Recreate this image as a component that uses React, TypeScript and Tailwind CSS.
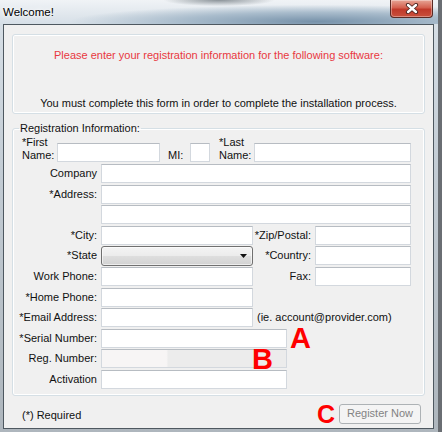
import type { ReactNode } from "react";

function Box({ className = "" }: { className?: string }) {
  return (
    <input
      readOnly
      className={`block h-[19px] shrink-0 border border-[#d3d8de] border-t-[#b7bcc2] bg-white outline-none ${className}`}
    />
  );
}

function Row({ label, children }: { label?: string; children?: ReactNode }) {
  return (
    <div className="relative flex h-[19px] items-center">
      <div className="w-[88px] shrink-0 pr-[4px] text-right">{label}</div>
      {children}
    </div>
  );
}

function SideLabel({ children }: { children: ReactNode }) {
  return <div className="w-[62px] shrink-0 pr-[4px] text-right">{children}</div>;
}

function Mark({ children, className = "" }: { children: ReactNode; className?: string }) {
  return (
    <span className={`font-bold text-[#ff0000] font-['Liberation_Sans',Arial,sans-serif] ${className}`}>
      {children}
    </span>
  );
}

export default function App() {
  return (
    <div className="h-[432px] w-[442px] overflow-hidden bg-[#6a6e73] font-['Liberation_Sans',Arial,sans-serif] text-[11px] leading-[13px] text-[#111]">
      <div className="flex h-[432px] w-[438px] flex-col bg-[linear-gradient(180deg,#d9e1e8_0%,#c3ccd4_40%,#aeb6bd_100%)]">
        {/* title bar */}
        <div className="flex h-[24px] shrink-0 items-start justify-between bg-[radial-gradient(ellipse_at_72%_90%,#7792aa_0%,#a9bccc_30%,transparent_55%),radial-gradient(ellipse_at_50%_0%,#8a9298_0%,transparent_18%),linear-gradient(180deg,#f0f3f6,#d6dfe7)]">
          <div className="pl-[3px] pt-[5px] text-[11.5px] leading-[14px] text-black [text-shadow:0_0_6px_#fff,0_0_3px_#fff]">
            Welcome!
          </div>
          <div className="mr-[5px] flex h-[18px] w-[43px] items-center justify-center rounded-b-[4px] border border-t-0 border-[#5a2a24] bg-[linear-gradient(180deg,#e7a596_0%,#d4604f_45%,#c0392a_55%,#c9503c_100%)] shadow-[inset_0_0_0_1px_rgba(255,255,255,0.35)]">
            <svg width="14" height="11" viewBox="0 0 14 11">
              <path d="M3 2 L11 9 M11 2 L3 9" stroke="#4a2420" strokeWidth="4.2" strokeLinecap="round" />
              <path d="M3 2 L11 9 M11 2 L3 9" stroke="#fff" strokeWidth="2.4" strokeLinecap="round" />
            </svg>
          </div>
        </div>

        {/* client area */}
        <div className="ml-[3px] flex h-[405px] w-[431px] flex-col border border-[#4e5860] bg-[#f0f0f0] px-[8px] pt-[9px]">
          <div className="h-[80px] shrink-0 rounded-[3px] border border-[#d5dfe5] pt-[14px] text-center shadow-[inset_0_0_0_1px_#fff]">
            <div className="text-[#e8383f]">Please enter your registration information for the following software:</div>
            <div className="mt-[35px]">You must complete this form in order to complete the installation process.</div>
          </div>

          <fieldset className="mt-[8px] rounded-[3px] border border-[#d5dfe5] pb-[6px] shadow-[inset_0_0_0_1px_#fff]">
            <legend className="ml-[6px] px-[1px]">Registration Information:</legend>

            <div className="flex items-end pt-[1px]">
              <div className="w-[44px] shrink-0 pl-[9px]">
                *First
                <br />
                Name:
              </div>
              <Box className="w-[103px] border-[#7da7d9] border-t-[#5f8fcb]" />
              <div className="ml-[8px] w-[22px] shrink-0">MI:</div>
              <Box className="w-[20px]" />
              <div className="ml-[9px] w-[35px] shrink-0">
                *Last
                <br />
                Name:
              </div>
              <Box className="w-[157px]" />
            </div>

            <div className="mt-[2px] flex flex-col gap-[1.6px]">
              <Row label="Company">
                <Box className="w-[310px]" />
              </Row>
              <Row label="*Address:">
                <Box className="w-[310px]" />
              </Row>
              <Row>
                <Box className="w-[310px]" />
              </Row>
              <Row label="*City:">
                <Box className="w-[152px]" />
                <SideLabel>*Zip/Postal:</SideLabel>
                <Box className="w-[96px]" />
              </Row>
              <Row label="*State">
                <div className="flex h-[20px] w-[152px] shrink-0 items-center justify-end rounded-[3px] border border-[#707070] bg-[linear-gradient(180deg,#f4f4f4_0%,#ececec_48%,#dedede_52%,#d2d2d2_100%)] pr-[5px] shadow-[inset_0_0_0_1px_rgba(255,255,255,0.6)]">
                  <svg width="7" height="4" viewBox="0 0 7 4">
                    <path d="M0 0 H7 L3.5 4 Z" fill="#111" />
                  </svg>
                </div>
                <SideLabel>*Country:</SideLabel>
                <Box className="w-[96px]" />
              </Row>
              <Row label="Work Phone:">
                <Box className="w-[152px]" />
                <SideLabel>Fax:</SideLabel>
                <Box className="w-[96px]" />
              </Row>
              <Row label="*Home Phone:">
                <Box className="w-[152px]" />
              </Row>
              <Row label="*Email Address:">
                <Box className="w-[152px]" />
                <span className="ml-[4px] whitespace-nowrap">(ie. account@provider.com)</span>
              </Row>
              <Row label="*Serial Number:">
                <Box className="w-[186px]" />
                <Mark className="ml-[3px] text-[29px] leading-[19px]">A</Mark>
              </Row>
              <Row label="Reg. Number:">
                <Box className="w-[186px] bg-[linear-gradient(90deg,#f7f5f5_0%,#f7f5f5_35%,#ececec_36%,#ececec_100%)]" />
                <Mark className="absolute left-[239px] top-[1px] text-[29px] leading-[19px]">B</Mark>
              </Row>
              <Row label="Activation">
                <Box className="w-[186px]" />
              </Row>
            </div>
          </fieldset>

          <div className="mr-[4px] mt-[8px] flex items-center justify-between">
            <div className="pl-[10px] pt-[3px]">(*) Required</div>
            <div className="flex items-center">
              <Mark className="mr-[4px] text-[25px] leading-[20px]">C</Mark>
              <div className="flex h-[20px] w-[82px] items-center justify-center rounded-[3px] border border-[#adb2b5] bg-[#f4f4f4] text-[#838383]">
                Register Now
              </div>
            </div>
          </div>
        </div>
      </div>
    </div>
  );
}
